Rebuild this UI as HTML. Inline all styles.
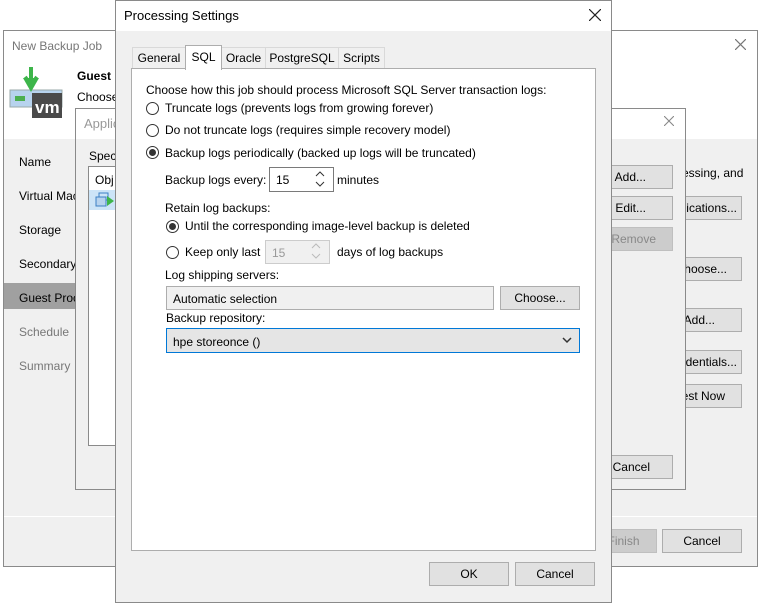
<!DOCTYPE html>
<html><head><style>
*{box-sizing:border-box;margin:0;padding:0}
body{width:761px;height:607px;background:#fff;font-family:"Liberation Sans",sans-serif;font-size:12px;color:#000;position:relative;overflow:hidden}
.a{position:absolute;white-space:nowrap}
.btn{position:absolute;background:#e1e1e1;border:1px solid #adadad;text-align:center;line-height:22px;font-size:12px}
.rad{position:absolute;width:13px;height:13px;border:1px solid #333;border-radius:50%;background:#fff}
.rad.on::after{content:"";position:absolute;left:2px;top:2px;width:7px;height:7px;border-radius:50%;background:#333}
</style></head><body>
<div class="a" style="left:3px;top:30px;width:755px;height:537px;background:#f0f0f0;border:1px solid #8a8a8a"></div>
<div class="a" style="left:4px;top:31px;width:753px;height:108px;background:#fff"></div>
<div class="a" style="left:12px;top:39px;color:#777;font-size:12px">New Backup Job</div>
<svg class="a" style="left:735px;top:39px" width="11" height="11"><path d="M0 0 L11 11 M11 0 L0 11" stroke="#777" stroke-width="1.2"/></svg>
<svg class="a" style="left:8px;top:64px" width="58" height="56">
<rect x="2" y="26" width="52" height="17" fill="#b7d3ee" stroke="#9aa" />
<rect x="7" y="32" width="10" height="5" fill="#4caf50"/>
<rect x="24" y="29" width="30" height="25" fill="#4a4a4a"/>
<text x="27" y="49" fill="#fff" font-family="Liberation Sans" font-weight="bold" font-size="17">vm</text>
<path d="M23 3 V18 M17 13 L23 21 L29 13" stroke="#3db54a" stroke-width="4" fill="none"/>
<path d="M15 14 L23 28 L31 14" fill="#3db54a"/>
</svg>
<div class="a" style="left:77px;top:69px;font-weight:bold">Guest P</div>
<div class="a" style="left:77px;top:90px">Choose</div>
<div class="a" style="left:19px;top:155px">Name</div>
<div class="a" style="left:19px;top:189px">Virtual Mac</div>
<div class="a" style="left:19px;top:223px">Storage</div>
<div class="a" style="left:19px;top:257px">Secondary</div>
<div class="a" style="left:4px;top:283px;width:72px;height:26px;background:#a0a0a0"></div>
<div class="a" style="left:19px;top:291px">Guest Proc</div>
<div class="a" style="left:19px;top:325px;color:#777">Schedule</div>
<div class="a" style="left:19px;top:359px;color:#777">Summary</div>
<div class="a" style="left:4px;top:516px;width:753px;height:1px;background:#fff"></div>
<div class="a" style="left:682px;top:166px">essing, and</div>
<div class="btn" style="left:660px;top:196px;width:82px;text-align:right;padding-right:4px">olications...</div>
<div class="btn" style="left:660px;top:257px;width:82px;text-align:right;padding-right:14px">hoose...</div>
<div class="btn" style="left:660px;top:308px;width:82px;text-align:right;padding-right:26px">Add...</div>
<div class="btn" style="left:660px;top:350px;width:82px;text-align:right;padding-right:4px">dentials...</div>
<div class="btn" style="left:660px;top:384px;width:82px;text-align:right;padding-right:16px">est Now</div>
<div class="btn" style="left:590px;top:529px;width:67px;background:#ccc;border-color:#bfbfbf;color:#888">Finish</div>
<div class="btn" style="left:662px;top:529px;width:80px">Cancel</div>
<div class="a" style="left:75px;top:108px;width:611px;height:382px;background:#f0f0f0;border:1px solid #8a8a8a"></div>
<div class="a" style="left:76px;top:109px;width:609px;height:30px;background:#fff"></div>
<div class="a" style="left:84px;top:116px;color:#999;font-size:13px">Applic</div>
<svg class="a" style="left:664px;top:116px" width="10" height="10"><path d="M0 0 L10 10 M10 0 L0 10" stroke="#888" stroke-width="1.1"/></svg>
<div class="a" style="left:89px;top:149px">Speci</div>
<div class="a" style="left:88px;top:166px;width:40px;height:280px;background:#fff;border:1px solid #8a8a8a"></div>
<div class="a" style="left:95px;top:173px">Obj</div>
<div class="a" style="left:89px;top:190px;width:30px;height:20px;background:#cce4f7"></div>
<svg class="a" style="left:95px;top:192px" width="20" height="16"><rect x="4" y="1" width="9" height="7" fill="none" stroke="#3b7fc4"/><rect x="1" y="5" width="10" height="9" fill="#b7d3ee" stroke="#3b7fc4"/><path d="M12 4 L19 9 L12 14Z" fill="#3db54a"/></svg>
<div class="btn" style="left:600px;top:165px;width:73px;text-align:right;padding-right:26px">Add...</div>
<div class="btn" style="left:600px;top:196px;width:73px;text-align:right;padding-right:26px">Edit...</div>
<div class="btn" style="left:600px;top:227px;width:73px;background:#ccc;border-color:#bfbfbf;color:#888;text-align:right;padding-right:16px">Remove</div>
<div class="btn" style="left:600px;top:455px;width:73px;text-align:right;padding-right:22px">Cancel</div>
<div class="a" style="left:115px;top:0;width:497px;height:603px;background:#f0f0f0;border:1px solid #8a8a8a"></div>
<div class="a" style="left:116px;top:1px;width:495px;height:30px;background:#fff"></div>
<div class="a" style="left:124px;top:8px;font-size:13px">Processing Settings</div>
<svg class="a" style="left:589px;top:9px" width="12" height="12"><path d="M0 0 L12 12 M12 0 L0 12" stroke="#222" stroke-width="1.2"/></svg>
<div class="a" style="left:132px;top:47px;width:54px;height:22px;background:#f0f0f0;border:1px solid #d9d9d9;text-align:center;line-height:21px;font-size:12px">General</div>
<div class="a" style="left:221px;top:47px;width:45px;height:22px;background:#f0f0f0;border:1px solid #d9d9d9;text-align:center;line-height:21px">Oracle</div>
<div class="a" style="left:265px;top:47px;width:74px;height:22px;background:#f0f0f0;border:1px solid #d9d9d9;text-align:center;line-height:21px">PostgreSQL</div>
<div class="a" style="left:338px;top:47px;width:47px;height:22px;background:#f0f0f0;border:1px solid #d9d9d9;text-align:center;line-height:21px">Scripts</div>
<div class="a" style="left:131px;top:68px;width:465px;height:483px;background:#fff;border:1px solid #adadad"></div>
<div class="a" style="left:185px;top:45px;width:37px;height:25px;background:#fff;border:1px solid #adadad;border-bottom:none;text-align:center;line-height:22px">SQL</div>
<div class="a" style="left:146px;top:83px">Choose how this job should process Microsoft SQL Server transaction logs:</div>
<div class="rad" style="left:146px;top:102px"></div><div class="a" style="left:165px;top:101px">Truncate logs (prevents logs from growing forever)</div>
<div class="rad" style="left:146px;top:124px"></div><div class="a" style="left:165px;top:123px">Do not truncate logs (requires simple recovery model)</div>
<div class="rad on" style="left:146px;top:146px"></div><div class="a" style="left:165px;top:146px">Backup logs periodically (backed up logs will be truncated)</div>
<div class="a" style="left:165px;top:173px">Backup logs every:</div>
<div class="a" style="left:269px;top:167px;width:65px;height:25px;border:1px solid #7a7a7a;background:#fff;padding:5px 0 0 6px">15</div>
<svg class="a" style="left:314px;top:170px" width="12" height="18"><path d="M2 6 L6 2 L10 6 M2 12 L6 16 L10 12" stroke="#333" fill="none"/></svg>
<div class="a" style="left:337px;top:173px">minutes</div>
<div class="a" style="left:165px;top:201px">Retain log backups:</div>
<div class="rad on" style="left:166px;top:220px"></div><div class="a" style="left:185px;top:219px">Until the corresponding image-level backup is deleted</div>
<div class="rad" style="left:166px;top:246px"></div><div class="a" style="left:185px;top:245px">Keep only last</div>
<div class="a" style="left:265px;top:240px;width:65px;height:24px;border:1px solid #ccc;background:#f0f0f0;padding:5px 0 0 6px;color:#999">15</div>
<svg class="a" style="left:310px;top:242px" width="12" height="18"><path d="M2 6 L6 2 L10 6 M2 12 L6 16 L10 12" stroke="#bbb" fill="none"/></svg>
<div class="a" style="left:337px;top:245px">days of log backups</div>
<div class="a" style="left:165px;top:268px">Log shipping servers:</div>
<div class="a" style="left:166px;top:286px;width:328px;height:24px;border:1px solid #adadad;background:#f0f0f0;padding:5px 0 0 6px">Automatic selection</div>
<div class="btn" style="left:500px;top:286px;width:80px">Choose...</div>
<div class="a" style="left:166px;top:311px">Backup repository:</div>
<div class="a" style="left:166px;top:328px;width:414px;height:25px;border:1px solid #0078d7;background:#e5e5e5;padding:6px 0 0 6px">hpe storeonce ()</div>
<svg class="a" style="left:562px;top:336px" width="10" height="8"><path d="M1 2 L5 6 L9 2" stroke="#333" stroke-width="1.5" fill="none"/></svg>
<div class="btn" style="left:429px;top:562px;width:80px">OK</div>
<div class="btn" style="left:515px;top:562px;width:80px">Cancel</div>
</body></html>
